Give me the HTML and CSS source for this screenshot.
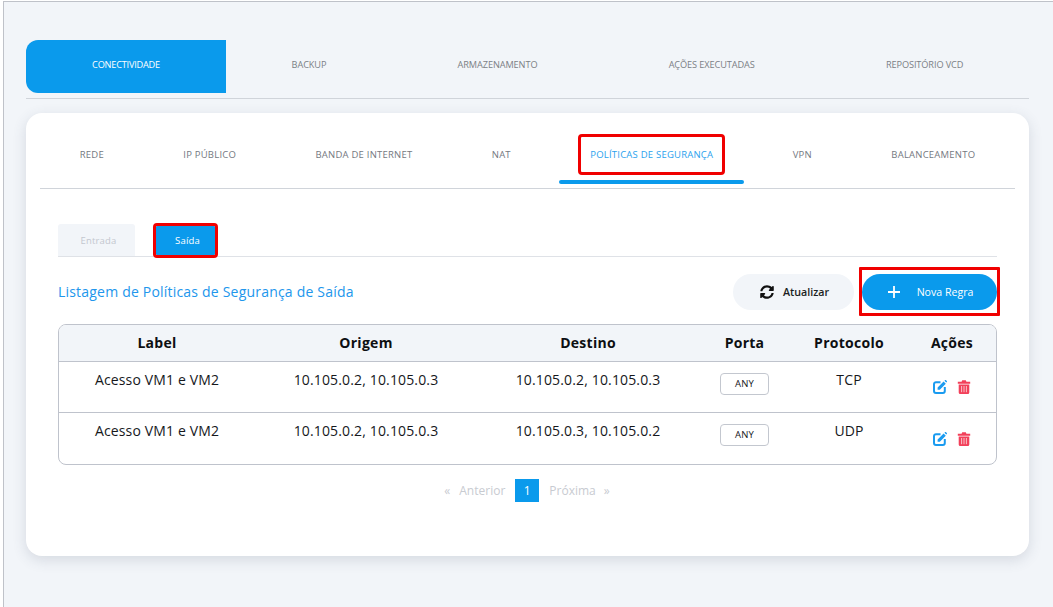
FILE: index.html
```html
<!DOCTYPE html>
<html lang="pt-BR">
<head>
<meta charset="utf-8">
<title>Políticas de Segurança</title>
<link rel="stylesheet" href="styles.css">
</head>
<body>
<div class="frame">
  <nav class="main-tabs">
    <a class="main-tab is-active">CONECTIVIDADE</a>
    <a class="main-tab">BACKUP</a>
    <a class="main-tab">ARMAZENAMENTO</a>
    <a class="main-tab">AÇÕES EXECUTADAS</a>
    <a class="main-tab">REPOSITÓRIO VCD</a>
  </nav>
  <main class="card">
    <nav class="sub-tabs">
      <a class="sub-tab">REDE</a>
      <a class="sub-tab">IP PÚBLICO</a>
      <a class="sub-tab">BANDA DE INTERNET</a>
      <a class="sub-tab">NAT</a>
      <a class="sub-tab is-active"><span class="mark-text">POLÍTICAS DE SEGURANÇA</span></a>
      <a class="sub-tab">VPN</a>
      <a class="sub-tab">BALANCEAMENTO</a>
    </nav>
    <div class="direction-tabs">
      <a class="direction-tab">Entrada</a>
      <a class="direction-tab is-active">Saída</a>
    </div>
    <div class="list-head">
      <h2 class="list-title">Listagem de Políticas de Segurança de Saída</h2>
      <div class="list-actions">
        <button class="btn btn-light">
          <svg class="btn-icon" viewBox="0 0 512 512"><path fill="#111" d="M370.72 133.28C339.458 104.008 298.888 87.962 255.848 88c-77.458.068-144.328 53.178-162.791 126.85-1.344 5.363-6.122 9.15-11.651 9.15H24.103c-7.498 0-13.194-6.807-11.807-14.176C33.933 94.924 134.813 8 256 8c66.448 0 126.791 26.136 171.315 68.685L463.03 40.97C478.149 25.851 504 36.559 504 57.941V192c0 13.255-10.745 24-24 24H345.941c-21.382 0-32.09-25.851-16.971-40.971l41.75-41.749zM32 296h134.059c21.382 0 32.09 25.851 16.971 40.971l-41.75 41.75c31.262 29.273 71.835 45.319 114.876 45.28 77.418-.07 144.315-53.144 162.787-126.849 1.344-5.363 6.122-9.15 11.651-9.15h57.304c7.498 0 13.193 6.807 11.807 14.176C478.067 417.076 377.187 504 256 504c-66.448 0-126.791-26.136-171.315-68.685L48.97 471.03C33.851 486.149 8 475.441 8 454.059V320c0-13.255 10.745-24 24-24z"/></svg>
          Atualizar
        </button>
        <button class="btn btn-primary">
          <svg class="btn-plus" viewBox="0 0 12 12"><path d="M6 0v12M0 6h12" stroke="#fff" stroke-width="1.8" fill="none"/></svg>
          Nova Regra
        </button>
      </div>
    </div>
    <div class="table-wrap">
      <table class="rules">
        <colgroup>
          <col class="col-label"><col class="col-origin"><col class="col-dest"><col class="col-port"><col class="col-proto"><col class="col-actions">
        </colgroup>
        <thead>
          <tr><th>Label</th><th>Origem</th><th>Destino</th><th>Porta</th><th>Protocolo</th><th>Ações</th></tr>
        </thead>
        <tbody>
          <tr>
            <td>Acesso VM1 e VM2</td><td>10.105.0.2, 10.105.0.3</td><td>10.105.0.2, 10.105.0.3</td>
            <td><span class="port">ANY</span></td><td>TCP</td>
            <td><div class="row-actions">
              <svg class="act" viewBox="0 0 14 14"><path d="M7.5 2.2H3a2 2 0 0 0-2 2V11a2 2 0 0 0 2 2h6.800a2 2 0 0 0 2-2V7" fill="none" stroke="#1a9bf0" stroke-width="2"/><path d="M4.6 7.6 10.6 1.6l2.2 2.2-6 6H4.6zM11.4.8l.6-.6a.8.8 0 0 1 1.1 0l.7.7a.8.8 0 0 1 0 1.1l-.6.6z" fill="#1a9bf0"/></svg>
              <svg class="act" viewBox="0 0 14 14"><path d="M.8 1.800h3.800L5.200.3h3.600l.6 1.500h3.800v1.900H.8zM1.700 4.400h10.600v8.100A1.500 1.500 0 0 1 10.800 14H3.200a1.500 1.500 0 0 1-1.500-1.500z" fill="#f2405a"/><path d="M4.600 6v6.200M7 6v6.200M9.400 6v6.200" stroke="#f9c0c8" stroke-width="1"/></svg>
            </div></td>
          </tr>
          <tr>
            <td>Acesso VM1 e VM2</td><td>10.105.0.2, 10.105.0.3</td><td>10.105.0.3, 10.105.0.2</td>
            <td><span class="port">ANY</span></td><td>UDP</td>
            <td><div class="row-actions">
              <svg class="act" viewBox="0 0 14 14"><path d="M7.5 2.2H3a2 2 0 0 0-2 2V11a2 2 0 0 0 2 2h6.800a2 2 0 0 0 2-2V7" fill="none" stroke="#1a9bf0" stroke-width="2"/><path d="M4.6 7.6 10.6 1.6l2.2 2.2-6 6H4.6zM11.4.8l.6-.6a.8.8 0 0 1 1.1 0l.7.7a.8.8 0 0 1 0 1.1l-.6.6z" fill="#1a9bf0"/></svg>
              <svg class="act" viewBox="0 0 14 14"><path d="M.8 1.800h3.800L5.200.3h3.600l.6 1.500h3.800v1.900H.8zM1.700 4.400h10.600v8.100A1.500 1.500 0 0 1 10.800 14H3.200a1.500 1.500 0 0 1-1.500-1.500z" fill="#f2405a"/><path d="M4.600 6v6.200M7 6v6.200M9.400 6v6.200" stroke="#f9c0c8" stroke-width="1"/></svg>
            </div></td>
          </tr>
        </tbody>
      </table>
    </div>
    <nav class="pager">
      <span class="pager-item">«</span>
      <span class="pager-item">Anterior</span>
      <span class="pager-current">1</span>
      <span class="pager-item">Próxima</span>
      <span class="pager-item">»</span>
    </nav>
  </main>
</div>
</body>
</html>
```
FILE: styles.css
```css
* { box-sizing: border-box; }
html, body { margin: 0; height: 100%; }
body {
  background: #fff;
  font-family: "Open Sans", "Liberation Sans", sans-serif;
  overflow: hidden;
}
.frame {
  margin: 1px 0 0 3px;
  height: 606px;
  padding: 38px 24px 0 22px;
  background: #f2f5f9;
  border-top: 1px solid #bfc2c9;
  border-left: 1px solid #bfc2c9;
}
.main-tabs {
  display: flex;
  height: 59px;
  padding-bottom: 5px;
  border-bottom: 1px solid #d0d4da;
}
.main-tab {
  flex: 1 1 auto;
  display: flex;
  align-items: center;
  justify-content: center;
  padding: 0 65px 4px;
  font-size: 9.2px;
  letter-spacing: -0.1px;
  color: #7b7f85;
  white-space: nowrap;
}
.main-tab.is-active {
  flex: 0 0 200px;
  padding: 0 0 4px;
  letter-spacing: -0.22px;
  background: #0a9aec;
  color: #fff;
  border-radius: 12px 0 0 12px;
}
.card {
  margin-top: 14px;
  height: 443px;
  padding: 0 14px;
  background: #fff;
  border-radius: 16px;
  box-shadow: 0 4px 14px rgba(60, 75, 100, 0.16);
}
.sub-tabs {
  display: flex;
  height: 76px;
  border-bottom: 1px solid #d0d4da;
}
.sub-tab {
  position: relative;
  flex: 1 1 auto;
  display: flex;
  align-items: center;
  justify-content: center;
  padding-top: 7px;
  font-size: 9.5px;
  letter-spacing: 0.22px;
  color: #75797f;
  white-space: nowrap;
}
.sub-tab.is-active { color: #2aa2ee; }
.sub-tab.is-active::after {
  content: "";
  position: absolute;
  left: 8px;
  right: 9px;
  bottom: 4px;
  height: 4px;
  border-radius: 2px;
  background: #0a9aec;
}
.mark-text {
  display: inline-block;
  margin: 0 -9px;
  padding: 0 9px;
  line-height: 35px;
  outline: 3px solid #f00000;
  border-radius: 1px;
}
.direction-tabs {
  display: flex;
  align-items: flex-start;
  margin: 35px 18px 0;
  height: 33px;
  border-bottom: 1px solid #dfe2e7;
}
.direction-tab {
  display: flex;
  align-items: center;
  justify-content: center;
  padding-left: 4px;
  font-size: 9.5px;
  letter-spacing: 0.2px;
  border-radius: 3px 3px 0 0;
}
.direction-tab:first-child {
  width: 77px;
  height: 32px;
  background: #f2f5f9;
  color: #c3c7cf;
}
.direction-tab.is-active {
  width: 59px;
  height: 29px;
  margin: 2px 0 0 21px;
  background: #0a9aec;
  color: #fff;
  outline: 3px solid #f00000;
  border-radius: 1px;
}
.list-head {
  display: flex;
  align-items: center;
  justify-content: space-between;
  margin: 17px 18px 0;
  height: 36px;
}
.list-title {
  margin: 0 0 2px;
  font-size: 14px;
  font-weight: 400;
  letter-spacing: 0.2px;
  color: #2196ec;
}
.list-actions { display: flex; gap: 8px; }
.btn {
  position: relative;
  display: flex;
  align-items: center;
  justify-content: center;
  height: 36px;
  border: 0;
  border-radius: 18px;
  font-family: inherit;
  font-size: 10.7px;
  font-weight: 600;
}
.btn-light {
  width: 121px;
  gap: 9px;
  padding-left: 8px;
  background: #f2f5f9;
  color: #1b1e22;
}
.btn-primary {
  width: 135px;
  gap: 17px;
  padding-left: 8px;
  font-size: 10.6px;
  font-weight: 400;
  background: #0a9aec;
  color: #fff;
}
.btn-primary::after {
  content: "";
  position: absolute;
  inset: -7px -3px -6px -3px;
  border: 3px solid #f00000;
  border-radius: 1px;
}
.btn-icon { width: 14px; height: 14px; }
.btn-plus { width: 12px; height: 12px; }
.table-wrap {
  margin: 14px 18px 0;
  height: 141px;
  border: 1px solid #bfc3cc;
  border-radius: 8px;
  overflow: hidden;
}
.rules {
  width: 100%;
  border-collapse: collapse;
  table-layout: fixed;
  font-size: 14px;
  letter-spacing: 0.15px;
  color: #16181c;
}
.col-label { width: 196px; }
.col-origin { width: 222px; }
.col-dest { width: 222px; }
.col-port { width: 91px; }
.col-proto { width: 118px; }
.col-actions { width: 88px; }
.rules th {
  height: 36px;
  padding: 0 0 1px;
  background: #f2f5f9;
  border-bottom: 1px solid #bfc3cc;
  font-weight: 700;
  letter-spacing: 0.27px;
  color: #0d0f12;
}
.rules td {
  height: 51px;
  padding: 8px 0 0;
  text-align: center;
  vertical-align: top;
  line-height: 20px;
}
.rules tbody tr + tr td { border-top: 1px solid #bfc3cc; }
.port {
  display: inline-block;
  width: 49px;
  height: 22px;
  margin-top: 3px;
  border: 1px solid #c3c7cf;
  border-radius: 4px;
  font-size: 9.5px;
  line-height: 20px;
  vertical-align: top;
}
.row-actions {
  display: flex;
  justify-content: center;
  gap: 10px;
  margin-top: 10px;
}
tr + tr .row-actions { margin-top: 11px; }
.act { width: 14px; height: 14px; }
.pager {
  display: flex;
  justify-content: center;
  align-items: center;
  gap: 10px;
  margin-top: 14px;
  padding-right: 1px;
  font-size: 12px;
  color: #c8cbd1;
}
.pager-item:first-child { margin-right: -1px; }
.pager-item:last-child { margin-left: -2px; }
.pager-current {
  width: 24px;
  height: 23px;
  background: #0a9aec;
  color: #fff;
  text-align: center;
  line-height: 23px;
}
```
